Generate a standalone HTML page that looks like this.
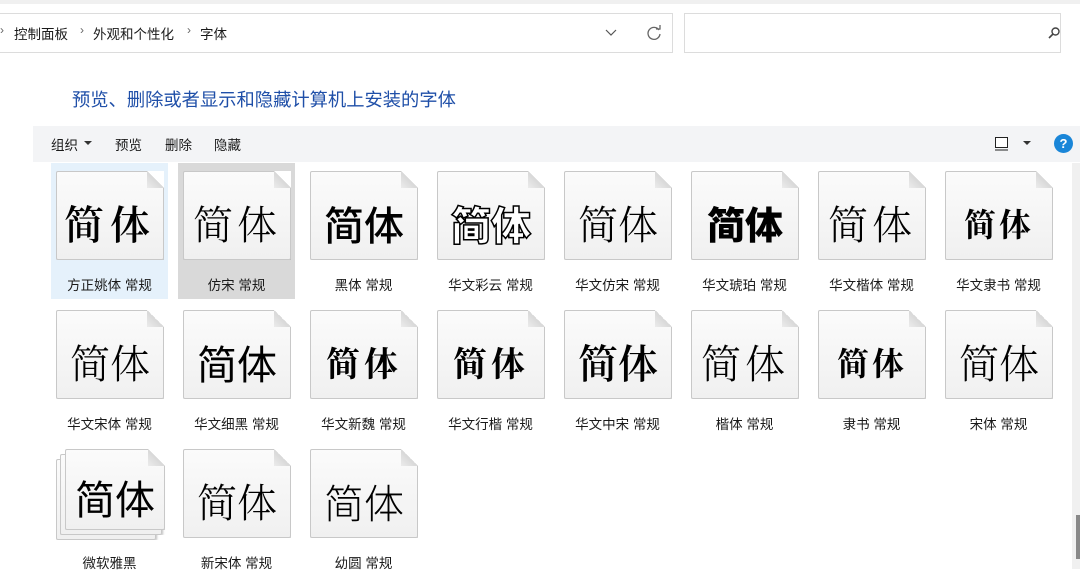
<!DOCTYPE html>
<html><head><meta charset="utf-8"><style>
*{margin:0;padding:0;box-sizing:border-box}
body{width:1080px;height:569px;overflow:hidden;background:#fff;font-family:"Liberation Sans","Noto Sans CJK SC",sans-serif;position:relative;color:#1a1a1a}
.top{position:absolute;left:0;top:0;width:1080px;height:4px;background:#f0f0f0}
.addr{position:absolute;left:-1px;top:13px;width:674px;height:40px;border:1px solid #dcdcdc;background:#fff}
.search{position:absolute;left:684px;top:13px;width:377px;height:40px;border:1px solid #dcdcdc;background:#fff}
.crumb{position:absolute;top:23px;font-size:13.5px;color:#1a1a1a}
.sep{position:absolute;top:23px;font-size:12px;color:#666}
.title{position:absolute;left:72px;top:86px;font-size:18.3px;color:#1f4fa8}
.tb{position:absolute;left:33px;top:126px;width:1047px;height:36px;background:#f3f4f6}
.tbi{position:absolute;top:134px;font-size:13.5px;color:#1a1a1a}
.item{position:absolute;width:117px;height:136px}
.sel1{background:#e5f1fb}
.sel2{background:#d9d9d9}
.ic{position:absolute;left:5px;top:8px;width:108px;height:89px;background:linear-gradient(#fbfbfb,#f0f0f0);border:1px solid #c8c8c8;box-shadow:1px 1px 2px rgba(0,0,0,.25);clip-path:polygon(0 0,91px 0,108px 17px,108px 100%,0 100%);border-radius:2px}
.ear{position:absolute;left:96px;top:8px;width:17px;height:17px;background:linear-gradient(225deg,#fff 50%,#d8d8d8 50%,#ececec)}
.ic span{position:absolute;left:0;right:0;top:27px;text-align:center;font-size:40px;line-height:48px;color:#000}
.lb{position:absolute;left:0;right:0;top:111px;text-align:center;font-size:13.5px;color:#1a1a1a}
.serif{font-family:"Noto Serif CJK SC",serif}
.sans{font-family:"Noto Sans CJK SC",sans-serif}
.sb{position:absolute;left:1072px;top:163px;width:8px;height:406px;background:#f0f0f0}
.thumb{position:absolute;left:1076px;top:515px;width:4px;height:44px;background:#888}
</style></head><body>
<div class="top"></div>
<div class="addr"></div>
<span class="sep" style="left:0">›</span>
<span class="crumb" style="left:14px">控制面板</span>
<span class="sep" style="left:80px">›</span>
<span class="crumb" style="left:93px">外观和个性化</span>
<span class="sep" style="left:187px">›</span>
<span class="crumb" style="left:200px">字体</span>
<svg style="position:absolute;left:604px;top:28px" width="14" height="10"><path d="M2 2 L7 7 L12 2" stroke="#555" fill="none" stroke-width="1.2"/></svg>
<svg style="position:absolute;left:645px;top:24px" width="18" height="18"><path d="M14 6 A6 6 0 1 0 15 10" stroke="#666" fill="none" stroke-width="1.3"/><path d="M11 5 L15 5 L15 1" stroke="#666" fill="none" stroke-width="1.3"/></svg>
<div class="search"></div>
<svg style="position:absolute;left:1046px;top:25px" width="16" height="16"><circle cx="9.5" cy="6.5" r="3.5" stroke="#444" fill="none" stroke-width="1.4"/><path d="M7 9 L3 13" stroke="#444" stroke-width="1.6"/></svg>
<div class="title">预览、删除或者显示和隐藏计算机上安装的字体</div>
<div class="tb"></div>
<span class="tbi" style="left:51px">组织</span>
<svg style="position:absolute;left:84px;top:141px" width="8" height="5"><path d="M0 0 L8 0 L4 4Z" fill="#333"/></svg>
<span class="tbi" style="left:115px">预览</span>
<span class="tbi" style="left:165px">删除</span>
<span class="tbi" style="left:214px">隐藏</span>
<svg style="position:absolute;left:995px;top:137px" width="14" height="14"><rect x="0.5" y="0.5" width="12" height="10" fill="#fff" stroke="#222"/><path d="M0 13 H13" stroke="#222"/></svg>
<svg style="position:absolute;left:1023px;top:141px" width="8" height="5"><path d="M0 0 L8 0 L4 4Z" fill="#333"/></svg>
<div style="position:absolute;left:1054px;top:134px;width:19px;height:19px;border-radius:50%;background:#1a86d8;color:#fff;font-size:13px;font-weight:bold;text-align:center;line-height:19px">?</div>

<div class="item sel1" style="left:51px;top:163px"><div class="ic"><span class="serif" style="font-weight:600;letter-spacing:6px">简体</span></div><div class="ear"></div><div class="lb">方正姚体 常规</div></div>
<div class="item sel2" style="left:178px;top:163px"><div class="ic"><span class="serif" style="font-weight:300;letter-spacing:4px">简体</span></div><div class="ear"></div><div class="lb">仿宋 常规</div></div>
<div class="item" style="left:305px;top:163px"><div class="ic"><span class="sans" style="font-weight:500">简体</span></div><div class="ear"></div><div class="lb">黑体 常规</div></div>
<div class="item" style="left:432px;top:163px"><div class="ic"><span class="sans" style="font-weight:900;color:#fff;-webkit-text-stroke:1.5px #000">简体</span></div><div class="ear"></div><div class="lb">华文彩云 常规</div></div>
<div class="item" style="left:559px;top:163px"><div class="ic"><span class="serif" style="font-weight:300">简体</span></div><div class="ear"></div><div class="lb">华文仿宋 常规</div></div>
<div class="item" style="left:686px;top:163px"><div class="ic"><span class="sans" style="font-weight:900;font-size:38px">简体</span></div><div class="ear"></div><div class="lb">华文琥珀 常规</div></div>
<div class="item" style="left:813px;top:163px"><div class="ic"><span class="serif" style="font-weight:300;letter-spacing:4px">简体</span></div><div class="ear"></div><div class="lb">华文楷体 常规</div></div>
<div class="item" style="left:940px;top:163px"><div class="ic"><span class="serif" style="font-weight:700;font-size:32px;letter-spacing:3px">简体</span></div><div class="ear"></div><div class="lb">华文隶书 常规</div></div>

<div class="item" style="left:51px;top:302px"><div class="ic"><span class="serif" style="font-weight:300">简体</span></div><div class="ear"></div><div class="lb">华文宋体 常规</div></div>
<div class="item" style="left:178px;top:302px"><div class="ic"><span class="sans" style="font-weight:400">简体</span></div><div class="ear"></div><div class="lb">华文细黑 常规</div></div>
<div class="item" style="left:305px;top:302px"><div class="ic"><span class="serif" style="font-weight:700;font-size:34px;letter-spacing:4px">简体</span></div><div class="ear"></div><div class="lb">华文新魏 常规</div></div>
<div class="item" style="left:432px;top:302px"><div class="ic"><span class="serif" style="font-weight:700;font-size:34px;letter-spacing:4px">简体</span></div><div class="ear"></div><div class="lb">华文行楷 常规</div></div>
<div class="item" style="left:559px;top:302px"><div class="ic"><span class="serif" style="font-weight:600">简体</span></div><div class="ear"></div><div class="lb">华文中宋 常规</div></div>
<div class="item" style="left:686px;top:302px"><div class="ic"><span class="serif" style="font-weight:300;letter-spacing:4px">简体</span></div><div class="ear"></div><div class="lb">楷体 常规</div></div>
<div class="item" style="left:813px;top:302px"><div class="ic"><span class="serif" style="font-weight:700;font-size:32px;letter-spacing:3px">简体</span></div><div class="ear"></div><div class="lb">隶书 常规</div></div>
<div class="item" style="left:940px;top:302px"><div class="ic"><span class="serif" style="font-weight:300">简体</span></div><div class="ear"></div><div class="lb">宋体 常规</div></div>

<div class="item" style="left:51px;top:441px">
<div class="ic" style="left:5px;top:18px;height:81px;width:100px"></div>
<div class="ic" style="left:9px;top:13px;height:81px;width:102px"></div>
<div class="ic" style="left:14px;top:8px;height:81px;width:100px;clip-path:polygon(0 0,83px 0,100px 17px,100px 100%,0 100%)"><span class="sans" style="top:23px">简体</span></div>
<div class="ear" style="left:97px"></div><div class="lb" style="top:111px">微软雅黑</div></div>
<div class="item" style="left:178px;top:441px"><div class="ic"><span class="serif" style="font-weight:300">简体</span></div><div class="ear"></div><div class="lb">新宋体 常规</div></div>
<div class="item" style="left:305px;top:441px"><div class="ic"><span class="sans" style="font-weight:300">简体</span></div><div class="ear"></div><div class="lb">幼圆 常规</div></div>

<div class="sb"></div><div class="thumb"></div>
</body></html>
